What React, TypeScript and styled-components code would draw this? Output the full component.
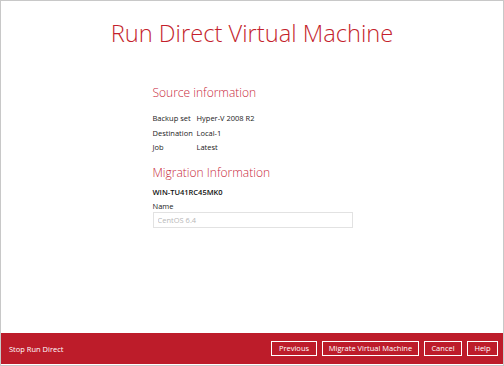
import React from 'react';
import styled, { createGlobalStyle } from 'styled-components';

const Global = createGlobalStyle`
html, body {
  margin: 0;
  padding: 0;
  background: #fff;
}
* { box-sizing: border-box; }
`;

const Frame = styled.div`
width: 504px;
height: 366px;
border: 1px solid #c8c8c8;
display: flex;
flex-direction: column;
font-family: "Open Sans", "Liberation Sans", sans-serif;
background: #fff;
`;

const Main = styled.div`
flex: 1;
display: flex;
flex-direction: column;
align-items: center;
`;

const Title = styled.h1`
margin: 17px 0 0;
font-size: 23.7px;
font-weight: 300;
line-height: 30px;
color: #c41f2d;
`;

const Column = styled.div`
width: 200px;
margin-left: 1px;
margin-top: 37px;
`;

const Heading = styled.h2<{ $top: number }>`
margin: ${p => p.$top}px 0 0;
font-size: 12px;
font-weight: 300;
line-height: 16px;
color: #c8283a;
`;

const InfoTable = styled.div`
display: grid;
grid-template-columns: 44px auto;
row-gap: 4px;
margin-top: 12px;
font-size: 7.5px;
line-height: 10.5px;
color: #222;
`;

const Host = styled.div`
margin-top: 6px;
font-size: 7.5px;
font-weight: 600;
line-height: 10px;
color: #111;
`;

const Label = styled.div`
margin-top: 4px;
font-size: 7.5px;
line-height: 10px;
color: #222;
`;

const Input = styled.input`
display: block;
width: 200px;
height: 16px;
margin-top: 1px;
padding: 0 4px;
border: 1px solid #e2e2e2;
font-family: inherit;
font-size: 7.5px;
color: #333;
outline: none;
&::placeholder { color: #b8b8b8; }
`;

const Footer = styled.div`
height: 31px;
margin-bottom: 1px;
background: #bd1c2a;
display: flex;
align-items: center;
padding: 0 5px 0 8px;
`;

const FooterLink = styled.span`
font-size: 7.5px;
color: #fff;
flex: 1;
`;

const Buttons = styled.div`
display: flex;
gap: 5px;
`;

const Button = styled.button<{ $w: number }>`
width: ${p => p.$w}px;
height: 15px;
padding: 0;
background: transparent;
border: 1px solid #fff;
color: #fff;
font-family: inherit;
font-size: 7.5px;
line-height: 13px;
cursor: pointer;
`;

const source = [
  ['Backup set', 'Hyper-V 2008 R2'],
  ['Destination', 'Local-1'],
  ['Job', 'Latest'],
];

export default function App() {
  return (
    <Frame>
      <Global />
      <Main>
        <Title>Run Direct Virtual Machine</Title>
        <Column>
          <Heading $top={0}>Source information</Heading>
          <InfoTable>
            {source.map(([k, v]) => (
              <React.Fragment key={k}>
                <span>{k}</span>
                <span>{v}</span>
              </React.Fragment>
            ))}
          </InfoTable>
          <Heading $top={12}>Migration Information</Heading>
          <Host>WIN-TU41RC45MK0</Host>
          <Label>Name</Label>
          <Input placeholder="CentOS 6.4" />
        </Column>
      </Main>
      <Footer>
        <FooterLink>Stop Run Direct</FooterLink>
        <Buttons>
          <Button $w={46}>Previous</Button>
          <Button $w={97}>Migrate Virtual Machine</Button>
          <Button $w={38}>Cancel</Button>
          <Button $w={31}>Help</Button>
        </Buttons>
      </Footer>
    </Frame>
  );
}
